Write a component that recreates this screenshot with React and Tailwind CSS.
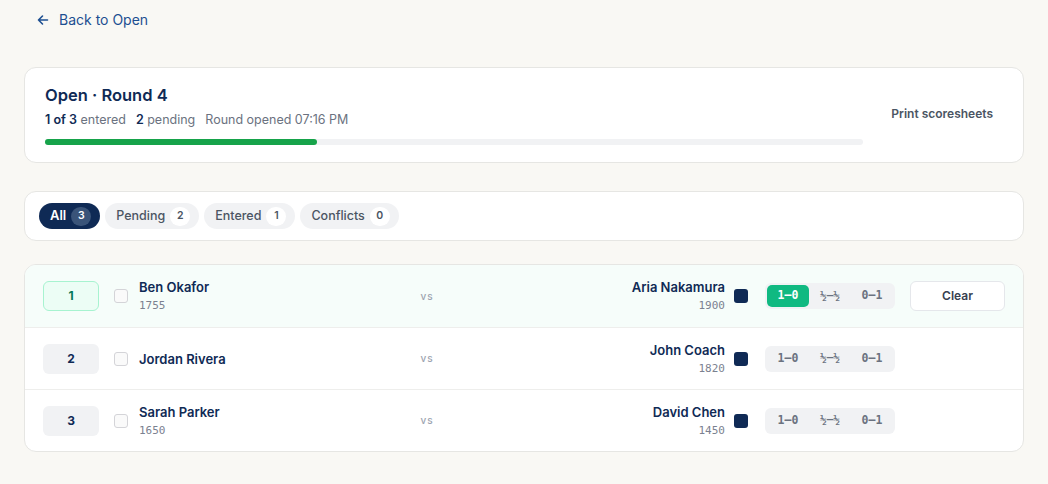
import React from "react";

const rows = [
  { n: 1, w: "Ben Okafor", wr: "1755", b: "Aria Nakamura", br: "1900", res: "1-0" },
  { n: 2, w: "Jordan Rivera", wr: null, b: "John Coach", br: "1820", res: null },
  { n: 3, w: "Sarah Parker", wr: "1650", b: "David Chen", br: "1450", res: null },
];

const mono = { fontFamily: '"DejaVu Sans Mono", "Liberation Mono", monospace' };

function Pill({ label, count, active }) {
  return (
    <button
      className={
        "flex h-[26px] items-center gap-[5px] rounded-full pl-[11px] pr-[9px] " +
        (active ? "bg-[#0f2a55] text-[13px] font-semibold text-white" : "bg-[#f1f2f4] text-[12.5px] font-medium text-[#4b5563]")
      }
    >
      <span>{label}</span>
      <span
        className={
          "flex h-[19px] min-w-[20px] items-center justify-center rounded-full px-[6px] text-[10.5px] font-semibold " +
          (active ? "bg-[#3a5479] text-white" : "bg-white text-[#4b5563]")
        }
      >
        {count}
      </span>
    </button>
  );
}

function ResultGroup({ res }) {
  const opts = ["1-0", "½-½", "0-1"];
  return (
    <div className="flex h-[26px] items-center rounded-md bg-[#f1f2f4] p-[2px]" style={mono}>
      {opts.map((o) => (
        <span
          key={o}
          className={
            "flex h-[22px] w-[42px] items-center justify-center rounded-[5px] text-[11.5px] font-bold " +
            (res === o ? "bg-[#10b981] text-white" : "text-[#6b7280]")
          }
        >
          {o === "½-½" ? <span className="text-[11px] font-semibold">½–½</span> : o.replace("-", "–")}
        </span>
      ))}
    </div>
  );
}

export default function App() {
  return (
    <div className="min-h-screen bg-[#f9f8f4] px-6 pb-8" style={{ fontFamily: "Inter, 'Noto Sans', sans-serif" }}>
      <div className="flex h-[38px] items-center pl-[13px] pt-[1px]">
        <a className="flex items-center gap-[10px] text-[14px] font-normal text-[#1d4f91]">
          <svg width="12" height="12" viewBox="0 0 12 12" fill="none" stroke="currentColor" strokeWidth="1.6" strokeLinecap="round" strokeLinejoin="round">
            <path d="M10.5 6H1.5M5.5 2L1.5 6l4 4" />
          </svg>
          <span>Back to Open</span>
        </a>
      </div>

      <div className="mt-[29px] flex items-center gap-[18px] rounded-xl border border-[#e6e6e3] bg-white pb-[17px] pl-5 pr-5 pt-[15px]">
        <div className="flex-1">
          <div className="text-[16.5px] font-semibold leading-6 text-[#0f2a55]">Open · Round 4</div>
          <div className="mt-[5px] flex items-center gap-[10px] text-[12.5px] leading-4 text-[#6b7280]">
            <span>
              <b className="font-semibold text-[#0f2a55]">1 of 3</b> entered
            </span>
            <span>
              <b className="font-semibold text-[#0f2a55]">2</b> pending
            </span>
            <span>Round opened 07:16 PM</span>
          </div>
          <div className="mt-[11px] h-[6px] w-full rounded-full bg-[#f1f2f4]">
            <div className="h-[6px] rounded-full bg-[#16a34a]" style={{ width: "33.3%" }} />
          </div>
        </div>
        <button className="px-[10px] py-2 text-[12px] font-semibold text-[#4b5563]">Print scoresheets</button>
      </div>

      <div className="mt-[28px] flex items-center gap-[5px] rounded-xl border border-[#e6e6e3] bg-white px-[14px] py-[11px]">
        <Pill label="All" count="3" active />
        <Pill label="Pending" count="2" />
        <Pill label="Entered" count="1" />
        <Pill label="Conflicts" count="0" />
      </div>

      <div className="mt-[23px] overflow-hidden rounded-xl border border-[#e6e6e3] bg-white">
        {rows.map((r, i) => (
          <div
            key={r.n}
            className={
              "flex h-[62px] items-center pl-[18px] pr-[18px] " +
              (i > 0 ? "border-t border-[#eeeeec] " : "") +
              (r.res ? "bg-[#f6fdfa]" : "")
            }
          >
            <div
              className={
                "flex h-[30px] w-[56px] items-center justify-center rounded-md text-[12px] font-bold " +
                (r.res ? "border border-[#a7f3d0] bg-[#ecfdf5] text-[#047857]" : "bg-[#f1f2f4] text-[#0f2a55]")
              }
            >
              {r.n}
            </div>
            <div className="ml-[15px] flex flex-1 items-center gap-[11px]">
              <span className="h-[14px] w-[14px] rounded-[3px] border border-[#d4d4d8] bg-[#fafafa]" />
              <div>
                <div className="text-[13px] font-semibold leading-[18px] text-[#0f2a55]">{r.w}</div>
                {r.wr && (
                  <div className="mt-[2px] text-[11px] leading-[16px] text-[#7b8190]" style={mono}>
                    {r.wr}
                  </div>
                )}
              </div>
            </div>
            <div className="w-[40px] text-center text-[10px] font-medium tracking-[1px] text-[#9ca3af]">vs</div>
            <div className="ml-[8px] flex flex-1 items-center justify-end gap-[9px]">
              <div className="text-right">
                <div className="text-[13px] font-semibold leading-[18px] text-[#0f2a55]">{r.b}</div>
                <div className="mt-[2px] text-[11px] leading-[16px] text-[#7b8190]" style={mono}>
                  {r.br}
                </div>
              </div>
              <span className="h-[14px] w-[14px] rounded-[3px] bg-[#0f2a55]" />
            </div>
            <div className="ml-[17px]">
              <ResultGroup res={r.res} />
            </div>
            <div className="ml-[15px] w-[95px]">
              {r.res && (
                <button className="flex h-[30px] w-[95px] items-center justify-center rounded-md border border-[#e5e7eb] bg-white text-[12px] font-semibold text-[#374151]">
                  Clear
                </button>
              )}
            </div>
          </div>
        ))}
      </div>
    </div>
  );
}
